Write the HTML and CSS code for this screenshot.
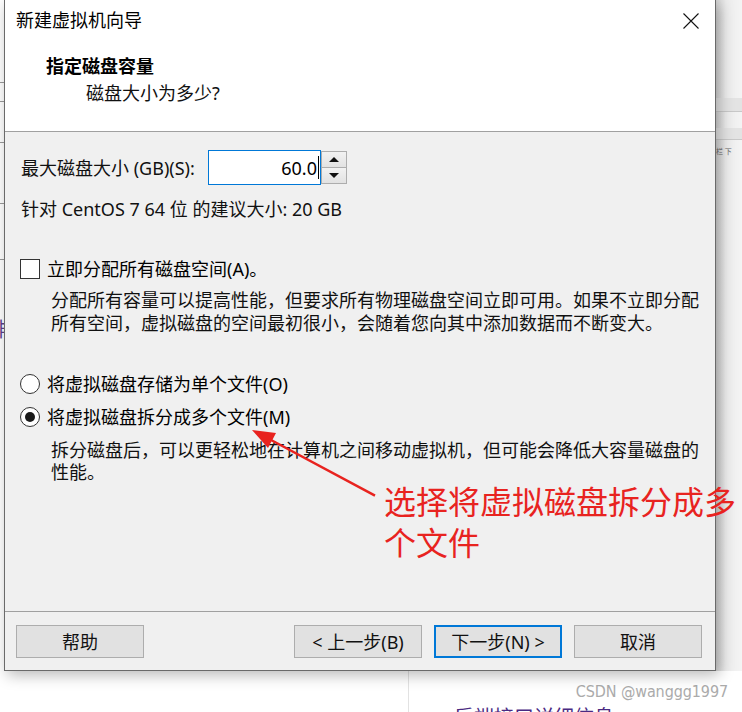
FILE: index.html
```html
<!DOCTYPE html>
<html lang="zh-CN">
<head>
<meta charset="utf-8">
<title>新建虚拟机向导</title>
<link rel="stylesheet" href="styles.css">
</head>
<body>
<div class="screen">
  <div class="top">
    <div class="left-strip">
      <span class="lm purple m1">讠</span>
      <span class="lm line l1"></span>
      <span class="lm line l2"></span>
      <span class="lm line l3"></span>
      <span class="lm line l4"></span>
      <span class="lm line l5"></span>
      <span class="lm purple m2">排</span>
    </div>
    <div class="dialog">
      <div class="titlebar">
        <span class="title">新建虚拟机向导</span>
        <svg class="close" width="16" height="16" viewBox="0 0 16 16"><path d="M0.5 0.5 L15.5 15.5 M15.5 0.5 L0.5 15.5" stroke="#111" stroke-width="1.1" fill="none"/></svg>
      </div>
      <div class="header">
        <div class="h-title">指定磁盘容量</div>
        <div class="h-sub">磁盘大小为多少?</div>
      </div>
      <div class="body">
        <div class="size-row">
          <span class="size-label">最大磁盘大小 (GB)(S):</span>
          <div class="spin-input">60.0<span class="caret"></span></div>
          <div class="spin-btns">
            <div class="sb"><span class="tri up"></span></div>
            <div class="sb"><span class="tri down"></span></div>
          </div>
        </div>
        <div class="rec">针对 CentOS 7 64 位 的建议大小: 20 GB</div>
        <div class="opt opt-check"><span class="checkbox"></span><span>立即分配所有磁盘空间(A)。</span></div>
        <p class="desc">分配所有容量可以提高性能，但要求所有物理磁盘空间立即可用。如果不立即分配<br>所有空间，虚拟磁盘的空间最初很小，会随着您向其中添加数据而不断变大。</p>
        <div class="opt opt-radio1"><span class="radio"></span><span>将虚拟磁盘存储为单个文件(O)</span></div>
        <div class="opt opt-radio2"><span class="radio on"></span><span>将虚拟磁盘拆分成多个文件(M)</span></div>
        <p class="desc desc2">拆分磁盘后，可以更轻松地在计算机之间移动虚拟机，但可能会降低大容量磁盘的<br>性能。</p>
      </div>
      <div class="footer">
        <button class="btn">帮助</button>
        <div class="spacer"></div>
        <button class="btn">&lt; 上一步(B)</button>
        <button class="btn primary">下一步(N) &gt;</button>
        <button class="btn">取消</button>
      </div>
    </div>
    <div class="right-strip">
      <div class="rbar b1"></div>
      <div class="rbar b2"></div>
      <div class="rtext">栏 下</div>
    </div>
  </div>
  <div class="bottom">
    <div class="bottom-left"></div>
    <div class="bottom-right">
      <div class="watermark">CSDN @wanggg1997</div>
      <div class="cut-text">后端接口详细信息</div>
    </div>
  </div>
  <svg class="arrow" width="742" height="712" viewBox="0 0 742 712">
    <polygon points="252,430 276,433 272.6,439.4 375.6,494.6 374.4,496.8 271.4,441.6 268,448" fill="#e8231f"/>
  </svg>
  <div class="annot">选择将虚拟磁盘拆分成多个文件</div>
</div>
</body>
</html>
```

FILE: styles.css
```css
* { box-sizing: border-box; }
html, body { margin: 0; padding: 0; }
body {
  width: 742px;
  height: 712px;
  overflow: hidden;
  background: #fff;
  font-family: "Noto Sans", "Noto Sans CJK SC", sans-serif;
  color: #000;
}
.screen {
  position: relative;
  width: 742px;
  height: 712px;
  display: flex;
  flex-direction: column;
  background: #fff;
}
.top { display: flex; height: 671px; }

/* left page remnants */
.left-strip {
  width: 4px;
  background: #fff;
  display: flex;
  flex-direction: column;
  overflow: hidden;
}
.lm { display: block; flex: none; }
.purple { color: #5b3d8c; font-size: 20px; line-height: 20px; margin-left: -14px; }
.m1 { margin-top: 42px; }
.line { width: 4px; height: 1px; background: #9a9a9a; }
.l1 { margin-top: 20px; }
.l2 { margin-top: 18px; }
.l3 { margin-top: 40px; }
.l4 { margin-top: 60px; }
.l5 { margin-top: 55px; }
.m2 { margin-top: 60px; }

/* dialog */
.dialog {
  width: 712px;
  height: 671px;
  border: 1px solid #6a6a6a;
  border-top: none;
  display: flex;
  flex-direction: column;
  background: #f0f0f0;
  box-shadow: 3px 4px 14px rgba(0, 0, 0, 0.28);
  position: relative;
  z-index: 1;
}
.titlebar {
  height: 40px;
  background: #fff;
  display: flex;
  align-items: center;
  padding-left: 11px;
  padding-right: 16px;
}
.title { font-size: 18px; line-height: 24px; flex: 1; }
.close { display: block; margin-top: 1px; }

.header {
  height: 92px;
  background: #fff;
  border-bottom: 1px solid #a0a0a0;
  padding: 14px 0 0 41px;
}
.h-title { font-size: 18px; line-height: 24px; font-weight: bold; }
.h-sub { font-size: 18px; line-height: 24px; margin: 3px 0 0 40px; color: #111; }

.body {
  flex: 1;
  padding: 18px 0 0 16px;
}
.size-row { display: flex; align-items: center; height: 35px; }
.size-label { width: 187px; font-size: 18px; line-height: 24px; color: #111; }
.spin-input {
  width: 113px;
  height: 35px;
  border: 1px solid #0078d7;
  background: #fff;
  display: flex;
  align-items: center;
  justify-content: flex-end;
  padding-right: 1px;
  font-size: 18px;
}
.caret { display: block; width: 1px; height: 23px; background: #000; margin-left: 1px; }
.spin-btns { display: flex; flex-direction: column; width: 26px; height: 33px; }
.sb {
  flex: 1;
  border: 1px solid #adadad;
  background: linear-gradient(#f2f2f2, #e2e2e2);
  display: flex;
  align-items: center;
  justify-content: center;
}
.sb + .sb { border-top: none; }
.tri { width: 0; height: 0; border-left: 5px solid transparent; border-right: 5px solid transparent; }
.tri.up { border-bottom: 5px solid #111; }
.tri.down { border-top: 5px solid #111; }

.rec { font-size: 18px; line-height: 24px; margin-top: 12px; color: #111; }

.opt {
  display: flex;
  align-items: center;
  font-size: 18px;
  line-height: 24px;
  margin-left: -1px;
  gap: 7px;
}
.opt-check { margin-top: 36px; }
.checkbox {
  width: 20px;
  height: 20px;
  border: 1px solid #333;
  background: #fff;
  flex: none;
}
.radio {
  width: 20px;
  height: 20px;
  border: 1px solid #333;
  border-radius: 50%;
  background: #fff;
  flex: none;
  display: flex;
  align-items: center;
  justify-content: center;
}
.radio.on::after {
  content: "";
  width: 10px;
  height: 10px;
  border-radius: 50%;
  background: #1a1a1a;
}
.desc {
  margin: 8px 0 0 30px;
  font-size: 18px;
  line-height: 23px;
  color: #111;
}
.opt-radio1 { margin-top: 37px; }
.opt-radio2 { margin-top: 9px; }
.desc.desc2 { margin-top: 10px; line-height: 22px; }

.footer {
  height: 59px;
  border-top: 1px solid #a0a0a0;
  display: flex;
  align-items: flex-start;
  gap: 12px;
  padding: 13px 13px 0 11px;
}
.spacer { flex: 1; }
.btn {
  width: 128px;
  height: 33px;
  border: 1px solid #adadad;
  background: #e1e1e1;
  font-family: "Noto Sans", "Noto Sans CJK SC", sans-serif;
  font-size: 18px;
  color: #111;
  padding: 0;
  line-height: 24px;
}
.btn.primary { border: 2px solid #0078d7; }

/* right page remnants */
.right-strip {
  flex: 1;
  background: linear-gradient(to right, #d4d4d4 0px, #ececec 10px, #f4f4f4 26px);
  padding-top: 98px;
  overflow: hidden;
}
.rbar { height: 14px; background: #e3e3e3; border-bottom: 1px solid #c8c8c8; }
.rbar.b2 { margin-top: 16px; height: 12px; }
.rtext { font-size: 7px; color: #666; margin-top: 6px; white-space: nowrap; }

/* bottom page area */
.bottom { flex: 1; display: flex; }
.bottom-left { width: 408px; }
.bottom-right {
  flex: 1;
  border-left: 1px solid #e2e2e2;
  overflow: hidden;
  display: flex;
  flex-direction: column;
}
.watermark {
  font-family: "DejaVu Sans", "Liberation Sans", sans-serif;
  font-stretch: condensed;
  font-size: 16px;
  letter-spacing: -0.1px;
  line-height: 20px;
  color: #ababab;
  text-align: right;
  padding-right: 14px;
  margin-top: 11px;
}
.cut-text {
  margin-left: 45px;
  font-size: 20px;
  line-height: 20px;
  color: #4a2a82;
  margin-top: 6px;
}

/* annotation overlay */
.arrow { position: absolute; left: 0; top: 0; z-index: 2; pointer-events: none; }
.annot {
  position: absolute;
  left: 384px;
  top: 480px;
  width: 356px;
  font-family: "Noto Sans CJK SC", sans-serif;
  font-size: 32px;
  line-height: 41px;
  color: #e8231f;
  z-index: 3;
}
```
